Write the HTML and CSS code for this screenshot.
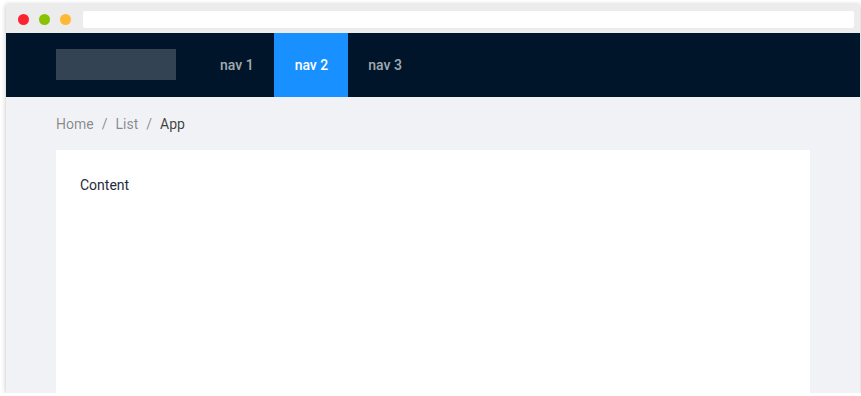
FILE: index.html
```html
<!DOCTYPE html>
<html>
<head>
    <title>Layout</title>
    <link rel="stylesheet" href="styles.css">
</head>
<body>
    <div class="window">
        <div class="chrome">
            <span class="dot red"></span>
            <span class="dot green"></span>
            <span class="dot orange"></span>
            <div class="address"></div>
        </div>

        <div class="layout">
            <div class="header">
                <div class="logo"></div>
                <ul class="menu">
                    <li>nav 1</li>
                    <li class="selected">nav 2</li>
                    <li>nav 3</li>
                </ul>
            </div>

            <div class="main">
                <div class="breadcrumb">
                    <span class="crumb">Home</span>
                    <span class="sep">/</span>
                    <span class="crumb">List</span>
                    <span class="sep">/</span>
                    <span class="crumb last">App</span>
                </div>
                <div class="content">Content</div>
            </div>
        </div>
    </div>
</body>
</html>
```

FILE: styles.css
```css
body {
    margin: 0;
    background-color: white;
    font-family: Roboto, "Noto Sans", sans-serif;
    font-size: 14px;
}
.window {
    margin: 4px 1px 0 6px;
    height: 389px;
    display: flex;
    flex-direction: column;
    background-color: #ececec;
    box-shadow: 0 1px 5px rgba(0,0,0,0.25);
    overflow: hidden;
}
.chrome {
    height: 29px;
    display: flex;
    align-items: center;
    padding: 0 6px 0 12px;
    box-sizing: border-box;
}
.dot {
    width: 11px;
    height: 11px;
    border-radius: 50%;
    margin-right: 10px;
    margin-top: 1px;
}
.dot.red {
    background-color: #fc2331;
}
.dot.green {
    background-color: #89c200;
}
.dot.orange {
    background-color: #fdb935;
    margin-right: 12px;
}
.address {
    flex: 1;
    height: 17px;
    margin-top: 1px;
    background-color: white;
    border-radius: 2px;
}
.layout {
    flex: 1;
    display: flex;
    flex-direction: column;
    background-color: #f0f2f5;
}
.header {
    height: 64px;
    padding: 0 50px;
    display: flex;
    background-color: #001529;
}
.logo {
    width: 120px;
    height: 31px;
    margin: 16px 24px 16px 0;
    background-color: rgba(255,255,255,0.2);
}
.menu {
    list-style: none;
    margin: 0;
    padding: 0;
    display: flex;
}
.menu li {
    padding: 0 20px;
    line-height: 64px;
    color: rgba(255,255,255,0.65);
    font-weight: 500;
}
.menu li.selected {
    padding: 0 20px 0 21px;
    background-color: #1890ff;
    color: white;
}
.main {
    flex: 1;
    display: flex;
    flex-direction: column;
    padding: 0 50px;
}
.breadcrumb {
    display: flex;
    margin: 17px 0 15px;
    line-height: 21px;
    color: rgba(0,0,0,0.45);
}
.sep {
    margin: 0 8px;
}
.crumb.last {
    color: rgba(0,0,0,0.75);
}
.content {
    flex: 1;
    padding: 25px 24px 23px;
    line-height: 21px;
    background-color: white;
    color: #1f2b3d;
}
```
